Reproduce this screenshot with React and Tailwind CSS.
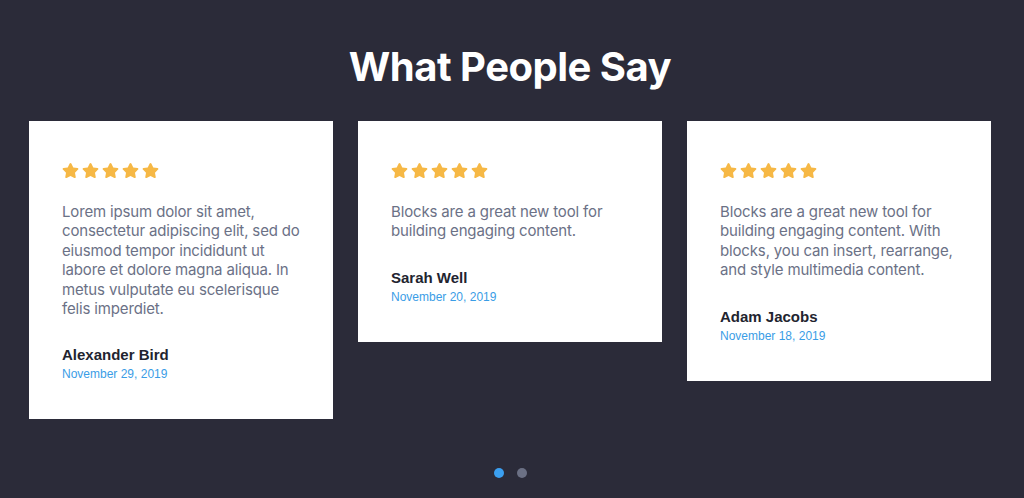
import { FaStar } from 'react-icons/fa';

const reviews = [
    {
        text: 'Lorem ipsum dolor sit amet, consectetur adipiscing elit, sed do eiusmod tempor incididunt ut labore et dolore magna aliqua. In metus vulputate eu scelerisque felis imperdiet.',
        name: 'Alexander Bird',
        date: 'November 29, 2019',
    },
    {
        text: 'Blocks are a great new tool for building engaging content.',
        name: 'Sarah Well',
        date: 'November 20, 2019',
    },
    {
        text: 'Blocks are a great new tool for building engaging content. With blocks, you can insert, rearrange, and style multimedia content.',
        name: 'Adam Jacobs',
        date: 'November 18, 2019',
    },
];

function Stars() {
    return (
        <div className="flex gap-[3px] text-[#f6b845]">
            {[0, 1, 2, 3, 4].map((i) => (
                <FaStar key={i} className="w-[17px] h-[17px]" />
            ))}
        </div>
    );
}

function ReviewCard({ text, name, date }) {
    return (
        <div className="w-[304px] bg-white pt-[41px] pb-[38px] pl-[33px] pr-[30px]">
            <Stars />
            <p className="mt-[23px] text-[15px] leading-[19.4px] text-[#6b7186] font-['Inter',sans-serif] tracking-[-0.15px]">{text}</p>
            <h3 className="mt-[28px] text-[15px] leading-[18px] font-bold text-[#22242f] font-['Liberation_Sans',Arial,sans-serif]">{name}</h3>
            <p className="mt-[3px] text-[12px] leading-[14px] text-[#3a9de6] font-['Liberation_Sans',Arial,sans-serif]">{date}</p>
        </div>
    );
}

export default function App() {
    return (
        <div className="min-h-[498px] bg-[#2b2b39] flex flex-col items-center pt-[42px] pr-[4px]">
            <h1 className="text-[40px] leading-[50px] font-bold text-white tracking-[-0.5px] font-['Inter',sans-serif]">What People Say</h1>
            <div className="flex items-start gap-[25px] mt-[29px]">
                {reviews.map((r) => (
                    <ReviewCard key={r.name} {...r} />
                ))}
            </div>
            <div className="flex gap-[13px] mt-[49px]">
                <span className="w-[10px] h-[10px] rounded-full bg-[#3b9ff0]" />
                <span className="w-[10px] h-[10px] rounded-full bg-[#6b7084]" />
            </div>
        </div>
    );
}
